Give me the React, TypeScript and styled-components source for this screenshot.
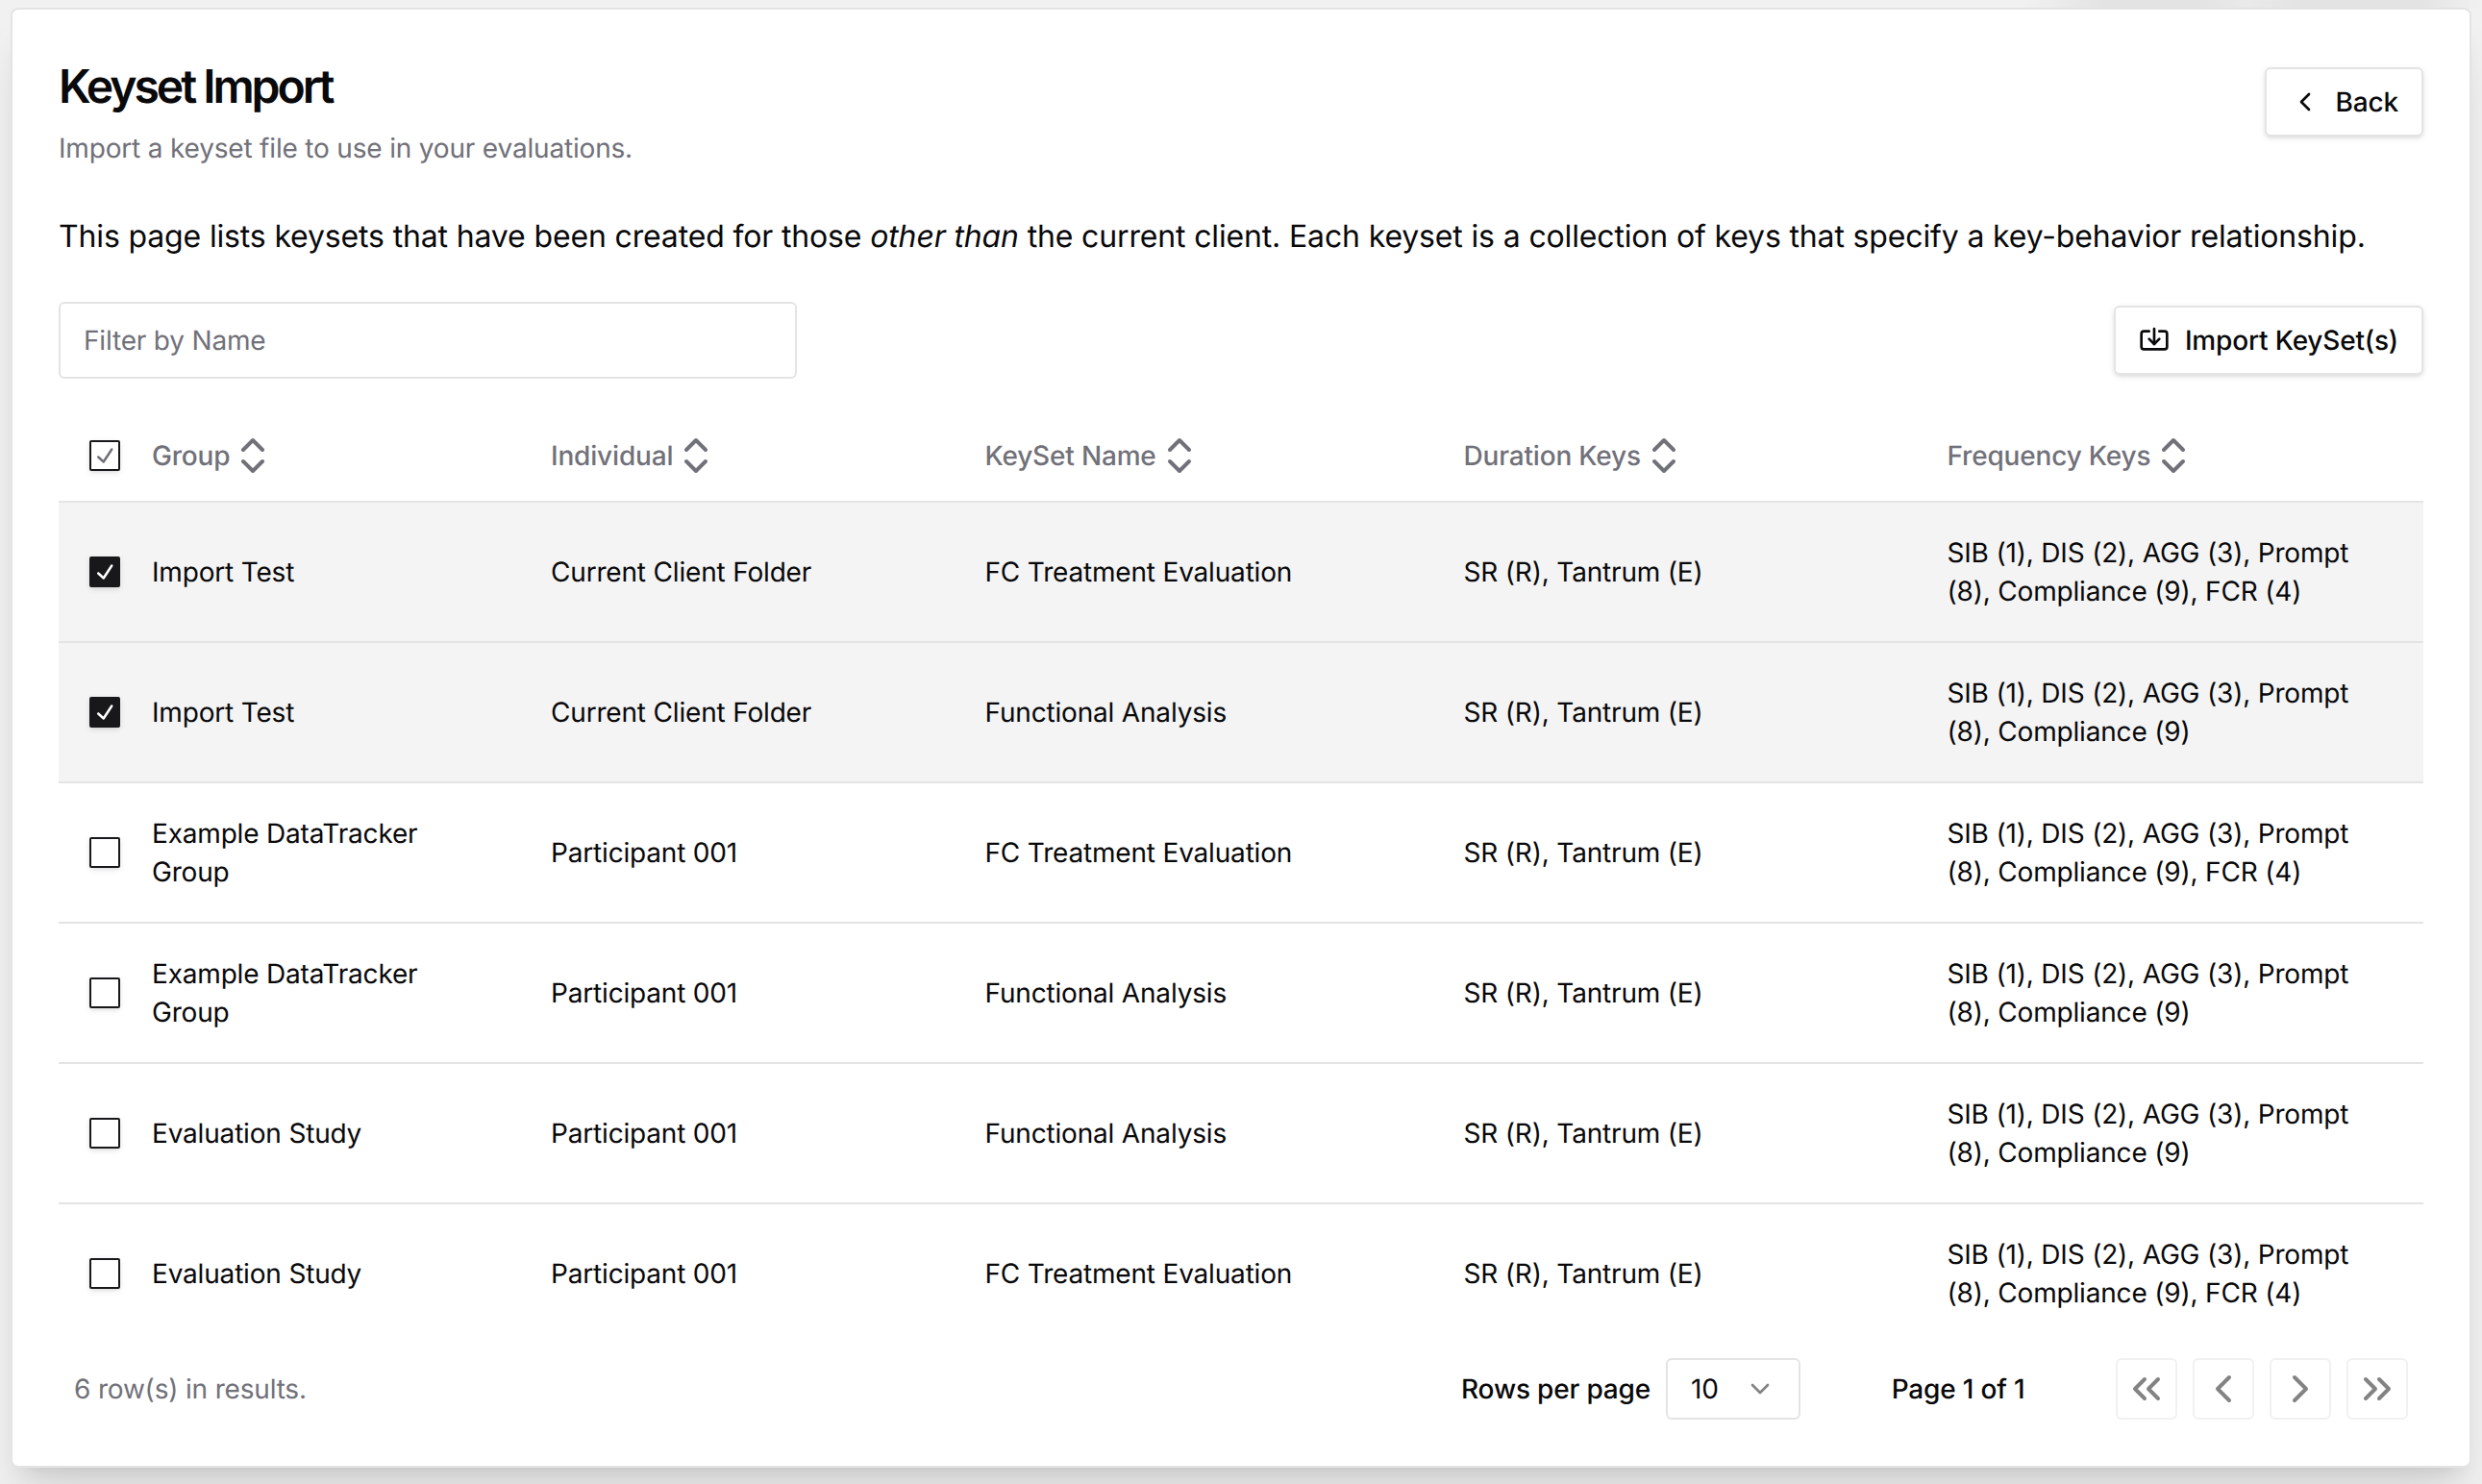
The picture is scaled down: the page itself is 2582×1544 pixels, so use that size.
import React from "react";
import styled, { createGlobalStyle, css } from "styled-components";
import { ChevronDown, ChevronLeft, ChevronRight, ChevronsLeft, ChevronsRight, ChevronsUpDown, Import } from "lucide-react";

const Global = createGlobalStyle`
  * { box-sizing: border-box; }
  body {
    margin: 0;
    background: #f1f1f1;
    color: #09090b;
    font-family: Inter, "Liberation Sans", sans-serif;
    font-size: 28px;
    line-height: 40px;
    letter-spacing: -0.18px;
    text-rendering: geometricPrecision;
  }
  button, input { text-rendering: inherit; letter-spacing: inherit; }
`;

const Page = styled.div`
  height: 1544px;
  padding: 8px 11px 17px;
  overflow: hidden;
  background:
    linear-gradient(90deg, #f1f1f1 2105px, #e3e3e3 2190px, #e3e3e3 2285px, #eaeaea 2338px, #e3e3e3 2395px, #e3e3e3 2515px, #f1f1f1 2582px)
      0 0 / 100% 9px no-repeat,
    #f1f1f1;
`;

const Card = styled.main`
  display: flex;
  flex-direction: column;
  height: 1519px;
  padding: 48px;
  border: 2px solid #e4e4e4;
  border-radius: 8px;
  background: #fff;
  box-shadow: 0 40px 50px -10px rgba(0, 0, 0, 0.1), 0 16px 20px -12px rgba(0, 0, 0, 0.1);
`;

const Header = styled.header`
  display: flex;
  justify-content: space-between;
  height: 112px;
`;

const Title = styled.h1`
  margin: 8px 0 20px;
  font-size: 48px;
  font-weight: 600;
  line-height: 48px;
  letter-spacing: -3.03px;
`;

const Subtitle = styled.p`
  margin: 0;
  color: #71717a;
`;

const Button = styled.button`
  display: inline-flex;
  align-items: center;
  gap: 16px;
  height: 72px;
  padding: 0 24px;
  border: 2px solid #e4e4e4;
  border-radius: 6px;
  background: #fff;
  color: #09090b;
  font: 500 28px/40px Inter, sans-serif;
  box-shadow: 0 2px 6px rgba(0, 0, 0, 0.1), 0 2px 4px -2px rgba(0, 0, 0, 0.1);
`;

const BackButton = styled(Button)`
  margin-top: 12px;
`;

const Intro = styled.p`
  margin: 0;
  padding-top: 52px;
  height: 144px;
  font-size: 32px;
  line-height: 48px;
  letter-spacing: -0.15px;
  white-space: nowrap;
`;

const Toolbar = styled.div`
  display: flex;
  align-items: center;
  justify-content: space-between;
  height: 80px;
`;

const FilterInput = styled.input`
  width: 768px;
  height: 80px;
  padding: 0 24px;
  border: 2px solid #e4e4e4;
  border-radius: 6px;
  background: #fff;
  font: 400 28px/40px Inter, sans-serif;
  &::placeholder { color: #71717a; opacity: 1; }
`;

const rowGrid = css`
  display: grid;
  grid-template-columns: 81px 415px 451.5px 498px 503px 511px;
  align-items: center;
`;

const Table = styled.div`
  margin-top: 32px;
`;

const HeadRow = styled.div`
  ${rowGrid}
  height: 97px;
  border-bottom: 2px solid #e4e4e4;
  color: #71717a;
  font-weight: 500;
`;

const Row = styled.div<{ $selected: boolean }>`
  ${rowGrid}
  height: 146px;
  border-bottom: 2px solid #e4e4e4;
  background: ${(p) => (p.$selected ? "#f4f4f4" : "#fff")};
  &:last-child { border-bottom: 0; height: 144px; }
`;

const CheckCell = styled.div`
  display: flex;
  padding-left: 32px;
`;

const Cell = styled.div<{ $width?: number }>`
  padding-left: 16px;
  max-width: ${(p) => (p.$width ? `${p.$width}px` : "none")};
`;

const HeadCell = styled(Cell)`
  display: flex;
  align-items: center;
`;

const CheckBox = styled.span<{ $filled: boolean }>`
  display: flex;
  align-items: center;
  justify-content: center;
  width: 32px;
  height: 32px;
  border: 2px solid #18181b;
  border-radius: 2px;
  background: ${(p) => (p.$filled ? "#18181b" : "transparent")};
  color: ${(p) => (p.$filled ? "#fff" : "#71717a")};
  box-shadow: 0 2px 6px rgba(0, 0, 0, 0.1), 0 2px 4px -2px rgba(0, 0, 0, 0.1);
  svg { flex-shrink: 0; }
`;

const Footer = styled.footer`
  display: flex;
  align-items: center;
  justify-content: space-between;
  height: 64px;
  margin-top: 16px;
  padding: 0 16px;
`;

const ResultCount = styled.span`
  color: #71717a;
`;

const Pager = styled.div`
  display: flex;
  align-items: center;
  font-weight: 500;
`;

const Select = styled.div`
  display: flex;
  align-items: center;
  justify-content: space-between;
  width: 140px;
  height: 64px;
  margin-left: 16px;
  padding: 0 24px;
  border: 2px solid #e4e4e4;
  border-radius: 6px;
  font-weight: 400;
  svg { opacity: 0.5; }
`;

const PageInfo = styled.span`
  width: 200px;
  margin: 0 64px;
  text-align: center;
`;

const PageButtons = styled.div`
  display: flex;
  gap: 16px;
`;

const PageButton = styled.button`
  display: flex;
  align-items: center;
  justify-content: center;
  width: 64px;
  height: 64px;
  padding: 0;
  border: 2px solid #e4e4e4;
  border-radius: 6px;
  background: #fff;
  color: #09090b;
  opacity: 0.5;
`;

const CheckMark = () => (
  <svg width="30" height="30" viewBox="0 0 15 15" fill="currentColor">
    <path
      fillRule="evenodd"
      clipRule="evenodd"
      d="M11.4669 3.72684C11.7558 3.91574 11.8369 4.30308 11.648 4.59198L7.39799 11.092C7.29783 11.2452 7.13556 11.3467 6.95402 11.3699C6.77247 11.3931 6.58989 11.3355 6.45446 11.2124L3.70446 8.71241C3.44905 8.48022 3.43023 8.08494 3.66242 7.82953C3.89461 7.57412 4.28989 7.55529 4.5453 7.78749L6.75292 9.79441L10.6018 3.90792C10.7907 3.61902 11.178 3.53795 11.4669 3.72684Z"
    />
  </svg>
);

const columns = ["Group", "Individual", "KeySet Name", "Duration Keys", "Frequency Keys"];

const FCT = "SIB (1), DIS (2), AGG (3), Prompt (8), Compliance (9), FCR (4)";
const FA = "SIB (1), DIS (2), AGG (3), Prompt (8), Compliance (9)";

const rows = [
  { selected: true, group: "Import Test", individual: "Current Client Folder", name: "FC Treatment Evaluation", frequency: FCT },
  { selected: true, group: "Import Test", individual: "Current Client Folder", name: "Functional Analysis", frequency: FA },
  { selected: false, group: "Example DataTracker Group", individual: "Participant 001", name: "FC Treatment Evaluation", frequency: FCT },
  { selected: false, group: "Example DataTracker Group", individual: "Participant 001", name: "Functional Analysis", frequency: FA },
  { selected: false, group: "Evaluation Study", individual: "Participant 001", name: "Functional Analysis", frequency: FA },
  { selected: false, group: "Evaluation Study", individual: "Participant 001", name: "FC Treatment Evaluation", frequency: FCT },
];

export default function App() {
  return (
    <Page>
      <Global />
      <Card>
        <Header>
          <div>
            <Title>Keyset Import</Title>
            <Subtitle>Import a keyset file to use in your evaluations.</Subtitle>
          </div>
          <BackButton>
            <ChevronLeft size={32} />
            Back
          </BackButton>
        </Header>
        <Intro>
          This page lists keysets that have been created for those <em>other than</em> the current client. Each keyset is a
          collection of keys that specify a key-behavior relationship.
        </Intro>
        <Toolbar>
          <FilterInput placeholder="Filter by Name" />
          <Button>
            <Import size={32} />
            Import KeySet(s)
          </Button>
        </Toolbar>
        <Table>
          <HeadRow>
            <CheckCell>
              <CheckBox $filled={false}>
                <CheckMark />
              </CheckBox>
            </CheckCell>
            {columns.map((c) => (
              <HeadCell key={c}>
                {c}
                <ChevronsUpDown size={48} />
              </HeadCell>
            ))}
          </HeadRow>
          {rows.map((r, i) => (
            <Row key={i} $selected={r.selected}>
              <CheckCell>
                <CheckBox $filled={r.selected}>{r.selected && <CheckMark />}</CheckBox>
              </CheckCell>
              <Cell $width={340}>{r.group}</Cell>
              <Cell>{r.individual}</Cell>
              <Cell>{r.name}</Cell>
              <Cell>SR (R), Tantrum (E)</Cell>
              <Cell $width={468}>{r.frequency}</Cell>
            </Row>
          ))}
        </Table>
        <Footer>
          <ResultCount>6 row(s) in results.</ResultCount>
          <Pager>
            Rows per page
            <Select>
              10
              <ChevronDown size={32} />
            </Select>
            <PageInfo>Page 1 of 1</PageInfo>
            <PageButtons>
              <PageButton><ChevronsLeft size={48} /></PageButton>
              <PageButton><ChevronLeft size={48} /></PageButton>
              <PageButton><ChevronRight size={48} /></PageButton>
              <PageButton><ChevronsRight size={48} /></PageButton>
            </PageButtons>
          </Pager>
        </Footer>
      </Card>
    </Page>
  );
}
